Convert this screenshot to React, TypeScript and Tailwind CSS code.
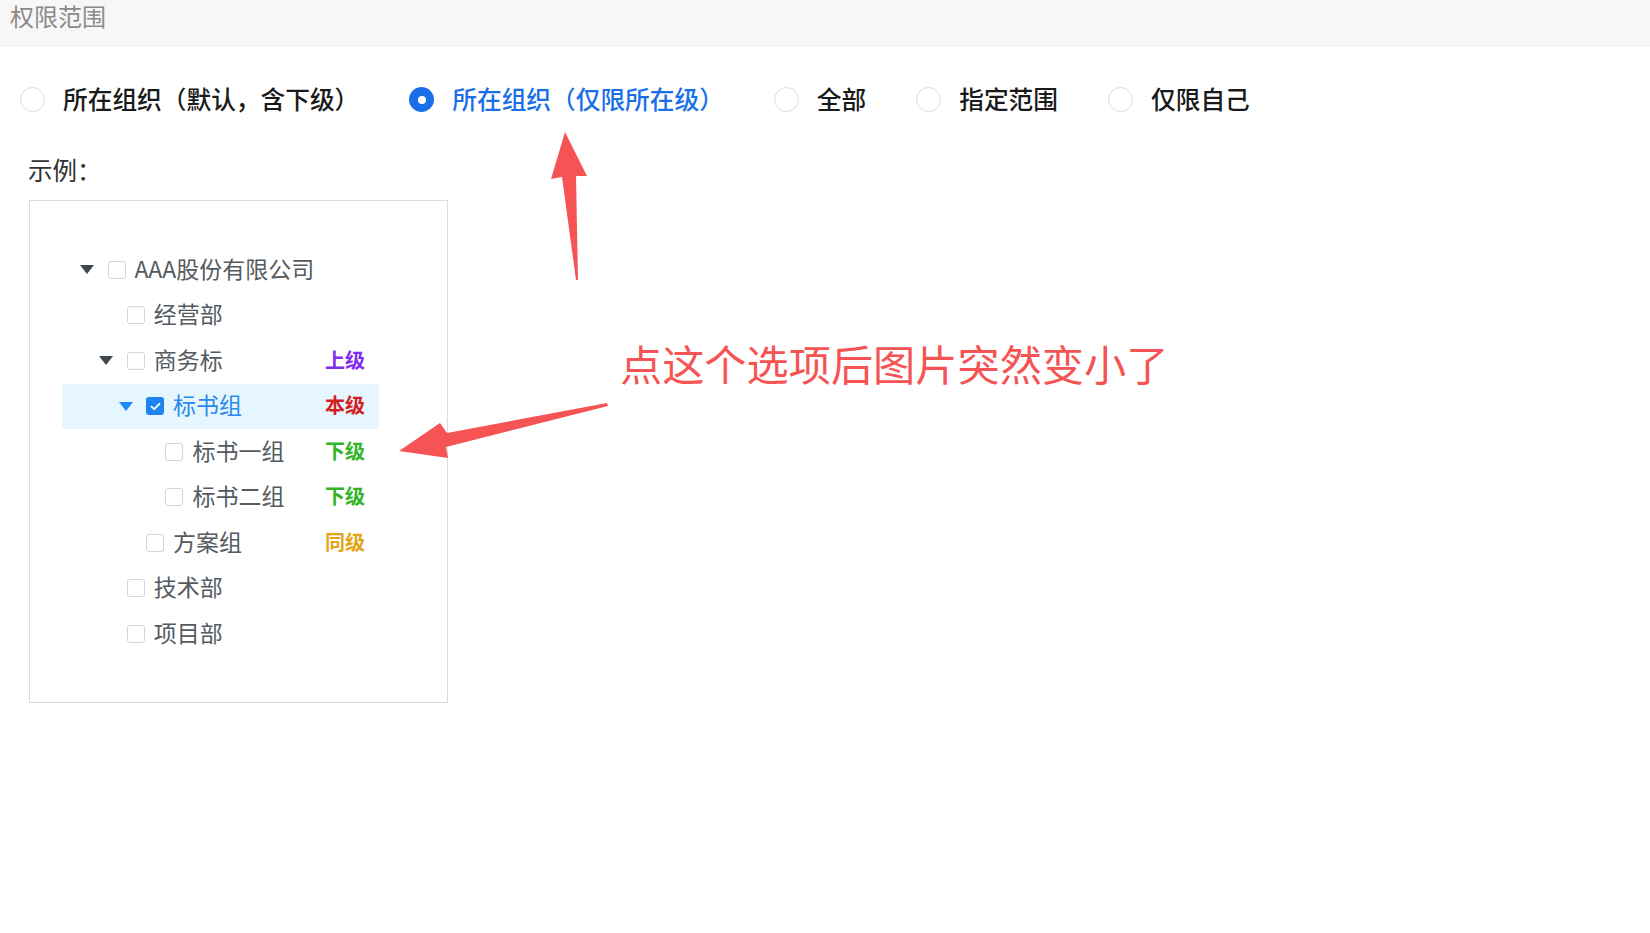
import React from "react"

const cjk = { fontFamily: '"Noto Sans CJK SC", "Noto Sans", sans-serif' }

const scopes = [
  { label: "所在组织（默认，含下级）", checked: false },
  { label: "所在组织（仅限所在级）", checked: true },
  { label: "全部", checked: false },
  { label: "指定范围", checked: false },
  { label: "仅限自己", checked: false },
]

type Node = {
  name: string
  level: number
  caret?: boolean
  checked?: boolean
  tag?: { text: string; color: string }
}

const tree: Node[] = [
  { name: "AAA股份有限公司", level: 0, caret: true },
  { name: "经营部", level: 1 },
  { name: "商务标", level: 1, caret: true, tag: { text: "上级", color: "text-[#7f2bf0]" } },
  { name: "标书组", level: 2, caret: true, checked: true, tag: { text: "本级", color: "text-[#d3201f]" } },
  { name: "标书一组", level: 3, tag: { text: "下级", color: "text-[#33b327]" } },
  { name: "标书二组", level: 3, tag: { text: "下级", color: "text-[#33b327]" } },
  { name: "方案组", level: 2, tag: { text: "同级", color: "text-[#e2a514]" } },
  { name: "技术部", level: 1 },
  { name: "项目部", level: 1 },
]

function Radio({ checked }: { checked: boolean }) {
  if (checked) {
    return (
      <span className="w-[25px] h-[25px] rounded-full bg-[#1a6fe8] flex items-center justify-center shrink-0">
        <span className="w-[8px] h-[8px] rounded-full bg-white" />
      </span>
    )
  }
  return <span className="w-[25px] h-[25px] rounded-full border border-[#dcdce6] bg-white shrink-0" />
}

function TreeRow({ node }: { node: Node }) {
  const active = node.checked
  return (
    <div className={"flex items-center h-[45.5px] " + (active ? "bg-[#e6f6ff]" : "")}>
      <div className="flex items-center w-[263px] shrink-0" style={{ paddingLeft: 18 + node.level * 19.3 }}>
        <span className="w-[27.5px] shrink-0 flex items-center">
          {node.caret && (
            <svg width="14" height="9" viewBox="0 0 14 9">
              <polygon points="0,0 14,0 7,9" fill={active ? "#1d8cf8" : "#3f464d"} />
            </svg>
          )}
        </span>
        {active ? (
          <span className="w-[18px] h-[18px] rounded-[3px] bg-[#1d84f0] flex items-center justify-center shrink-0">
            <svg width="11" height="9" viewBox="0 0 11 9">
              <path d="M1.5 4.6 L4.2 7.2 L9.5 1.8" stroke="white" strokeWidth="1.8" fill="none" strokeLinecap="round" strokeLinejoin="round" />
            </svg>
          </span>
        ) : (
          <span className="w-[18px] h-[18px] rounded-[3px] border border-[#d4d4d4] bg-white shrink-0" />
        )}
        <span className={"ml-[9px] pb-[4px] text-[23px] whitespace-nowrap " + (active ? "text-[#2a8af0]" : "text-[#555a60]")}>
          {node.name}
        </span>
      </div>
      {node.tag && (
        <span className={"pb-[2px] text-[20px] font-bold " + node.tag.color}>{node.tag.text}</span>
      )}
    </div>
  )
}

export default function App() {
  return (
    <div className="relative w-full min-h-[933px] bg-white" style={cjk}>
      <div className="h-[46px] bg-[#f7f7f7] border-b border-[#e9e9e9] pl-[10px]">
        <span className="block text-[24px] leading-[32px] text-[#8a8a8a]">权限范围</span>
      </div>

      <div className="flex items-center h-[40px] mt-[34px] pl-[20px]">
        {scopes.map(s => (
          <label key={s.label} className="flex items-center gap-[18px] mr-[50px]">
            <Radio checked={s.checked} />
            <span className={"pb-[2px] text-[24.7px] font-medium whitespace-nowrap " + (s.checked ? "text-[#1a6fe8]" : "text-[#1a1a1a]")}>
              {s.label}
            </span>
          </label>
        ))}
      </div>

      <div className="pl-[28px]">
        <p className="mt-[33px] text-[24.5px] leading-[34px] text-[#333]">示例：</p>
        <div className="mt-[13px] ml-[1px] w-[419px] h-[503px] border border-[#dcdcdc] pt-[46px] pl-[32px]">
          <div className="w-[317px]">
            {tree.map(n => <TreeRow key={n.name} node={n} />)}
          </div>
        </div>
      </div>

      <svg className="absolute left-0 top-0 pointer-events-none" width="1650" height="933">
        <polygon points="565,132 551,179 562,177 576,280 578,280 576,176 587,176" fill="#f65454" />
        <polygon points="399,451 440,423 447,433 607,403 608,406 446,447 448,458" fill="#f65454" />
      </svg>

      <div className="absolute left-[620px] top-[342px] text-[42.2px] leading-[42px] text-[#f65454] whitespace-nowrap">
        点这个选项后图片突然变小了
      </div>
    </div>
  )
}
